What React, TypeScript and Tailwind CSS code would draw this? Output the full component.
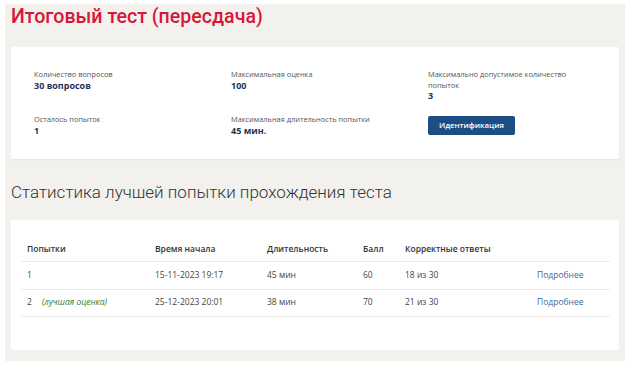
import React from "react";

const font = { fontFamily: '"Open Sans", "Noto Sans", sans-serif' };
const roboto = { fontFamily: 'Roboto, "Open Sans", sans-serif' };

function Info({ label, value }: { label: React.ReactNode; value: string }) {
  return (
    <div className="flex flex-col">
      <div className="text-[7.4px] leading-[10.5px] text-[#555]">{label}</div>
      <div className="text-[9px] leading-[11px] font-bold text-[#1d3557]">{value}</div>
    </div>
  );
}

const rows = [
  { n: "1", best: false, start: "15-11-2023 19:17", dur: "45 мин", score: "60", correct: "18 из 30" },
  { n: "2", best: true, start: "25-12-2023 20:01", dur: "38 мин", score: "70", correct: "21 из 30" },
];

export default function App() {
  return (
    <div className="w-[632px] h-[371px] bg-white pt-[4px] pl-[5px]" style={font}>
      <div className="w-[620px] h-[357px] bg-[#f2f1ee] px-[6px] flex flex-col">
        <h1 className="text-[19.6px] leading-[28px] -mt-[1px] font-medium text-[#d7173a]" style={roboto}>
          Итоговый тест (пересдача)
        </h1>
        <div className="mt-[16px] h-[112px] bg-white rounded-[2px] shadow-[0_1px_1px_rgba(0,0,0,0.04)] pl-[23px] pt-[22px]">
          <div className="grid grid-cols-[197px_197px_197px] grid-rows-[45px_auto]">
            <Info label="Количество вопросов" value="30 вопросов" />
            <Info label="Максимальная оценка" value="100" />
            <Info
              label={
                <>
                  Максимально допустимое количество
                  <br />
                  попыток
                </>
              }
              value="3"
            />
            <Info label="Осталось попыток" value="1" />
            <Info label="Максимальная длительность попытки" value="45 мин." />
            <div>
              <button className="mt-[2px] w-[87px] h-[19px] bg-[#1c4e85] rounded-[2px] text-white text-[7.8px] font-semibold flex items-center justify-center">
                Идентификация
              </button>
            </div>
          </div>
        </div>
        <h2 className="mt-[21px] text-[17px] leading-[24px] text-[#333] font-light" style={roboto}>
          Статистика лучшей попытки прохождения теста
        </h2>
        <div className="mt-[16px] h-[130px] bg-white rounded-[2px] pl-[10px] pr-[9px] pt-[18px]">
          <div className="grid grid-cols-[134px_112px_96px_42px_132px_1fr] h-[24px] items-center border-b border-[#ebebeb] text-[8.5px] font-semibold text-[#333]">
            <div className="pl-[6px]">Попытки</div>
            <div>Время начала</div>
            <div>Длительность</div>
            <div>Балл</div>
            <div>Корректные ответы</div>
            <div></div>
          </div>
          {rows.map((r) => (
            <div
              key={r.n}
              className="grid grid-cols-[134px_112px_96px_42px_132px_1fr] h-[27.5px] items-center border-b border-[#ebebeb] text-[8.5px] text-[#444]"
            >
              <div className="pl-[6px] flex items-center">
                <span>{r.n}</span>
                {r.best && <span className="ml-[10px] italic text-[#2f7d32]">(лучшая оценка)</span>}
              </div>
              <div>{r.start}</div>
              <div>{r.dur}</div>
              <div>{r.score}</div>
              <div>{r.correct}</div>
              <div className="text-[#3e6896]">Подробнее</div>
            </div>
          ))}
        </div>
      </div>
    </div>
  );
}
